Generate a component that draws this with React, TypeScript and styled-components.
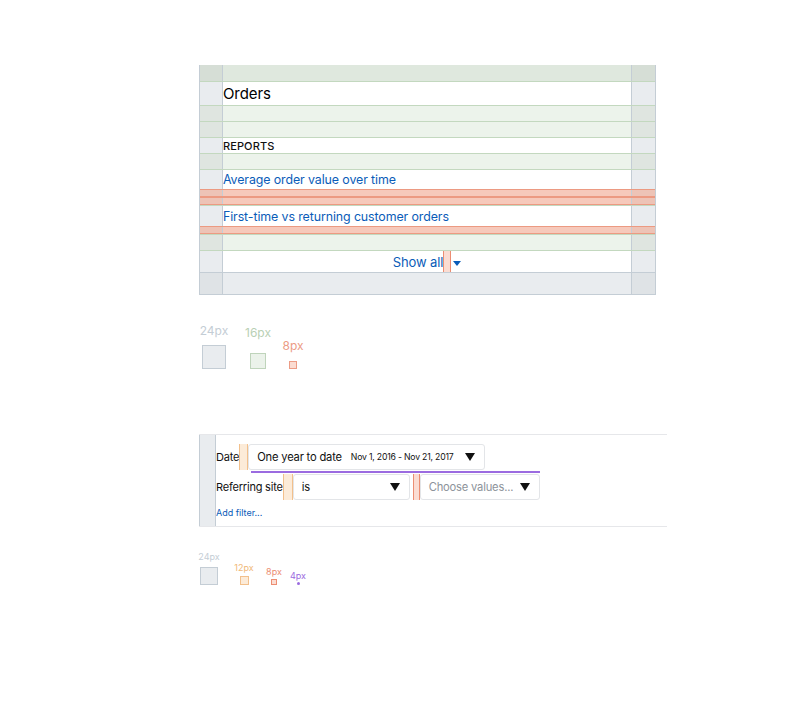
import React from "react";
import styled, { createGlobalStyle, css } from "styled-components";

const Global = createGlobalStyle`
  html, body { margin: 0; padding: 0; background: #fff; }
  body { font-family: Inter, "Noto Sans", sans-serif; color: #212b36; }
`;

const Page = styled.div`
  width: 803px;
  height: 704px;
  padding: 65px 0 0 199px;
  box-sizing: border-box;
  display: flex;
  flex-direction: column;
`;

const Panel = styled.div`
  width: 457px;
  display: flex;
  flex-direction: column;
  border-left: 1px solid #c4cdd5;
  border-right: 1px solid #c4cdd5;
  border-bottom: 1px solid #c4cdd5;
  box-sizing: border-box;
`;

type Kind = "top" | "green" | "white" | "red" | "gray";

const palette: Record<Kind, { mid: string; gut: string; line: string }> = {
  top: { mid: "#dfe8de", gut: "#d6ded6", line: "#c9d9c6" },
  green: { mid: "#ecf3eb", gut: "#dfe5e0", line: "#c3d8bf" },
  white: { mid: "#ffffff", gut: "#e9ecef", line: "#c3d8bf" },
  red: { mid: "#f6c9bb", gut: "#edc3b6", line: "#ec9a82" },
  gray: { mid: "#e9ecef", gut: "#dfe3e6", line: "#c4cdd5" },
};

const Row = styled.div<{ $kind: Kind; $h: number }>`
  display: grid;
  grid-template-columns: 23px 1fr 24px;
  height: ${(p) => p.$h}px;
  box-sizing: border-box;
  border-top: 1px solid ${(p) => palette[p.$kind].line};
  background: ${(p) => palette[p.$kind].mid};
  ${(p) =>
    p.$kind === "top" &&
    css`
      border-top: none;
    `}
  ${(p) =>
    p.$kind === "red" &&
    css`
      border-bottom: 1px solid ${palette.red.line};
    `}
`;

const Gutter = styled.div<{ $kind: Kind; $side: "l" | "r" }>`
  background: ${(p) => palette[p.$kind].gut};
  ${(p) =>
    p.$side === "l"
      ? css`border-right: 1px solid #c4cdd5;`
      : css`border-left: 1px solid #c4cdd5;`}
`;

const Cell = styled.div<{ $center?: boolean }>`
  display: flex;
  align-items: center;
  justify-content: ${(p) => (p.$center ? "center" : "flex-start")};
  min-width: 0;
`;

const Title = styled.span`
  font-size: 15px;
  color: #000;
  letter-spacing: -0.1px;
`;

const Heading = styled.span`
  font-size: 11px;
  font-weight: 500;
  color: #111;
  letter-spacing: 0.1px;
`;

const Link = styled.span<{ $size?: number }>`
  font-size: ${(p) => p.$size ?? 12.4}px;
  color: #0a5cb8;
  letter-spacing: -0.1px;
`;

const Marker = styled.span<{ $w: number; $fill: string; $line: string }>`
  display: block;
  align-self: stretch;
  flex: none;
  width: ${(p) => p.$w}px;
  box-sizing: border-box;
  background: ${(p) => p.$fill};
  border: 1px solid ${(p) => p.$line};
  border-top: none;
  border-bottom: none;
`;

const Caret = ({ color, w = 10, h = 8 }: { color: string; w?: number; h?: number }) => (
  <svg width={w} height={h} viewBox="0 0 10 8" preserveAspectRatio="none" style={{ display: "block", flex: "none" }}>
    <polygon points="0,0 10,0 5,8" fill={color} />
  </svg>
);

const BlueCaret = styled.span`
  margin-left: 2px;
  margin-top: 3px;
`;

const PanelRow = ({
  kind,
  h,
  center,
  children,
}: {
  kind: Kind;
  h: number;
  center?: boolean;
  children?: React.ReactNode;
}) => (
  <Row $kind={kind} $h={h}>
    <Gutter $kind={kind} $side="l" />
    <Cell $center={center}>{children}</Cell>
    <Gutter $kind={kind} $side="r" />
  </Row>
);

const Legend = styled.div<{ $top: number; $h: number }>`
  display: flex;
  align-items: flex-end;
  margin-top: ${(p) => p.$top}px;
  height: ${(p) => p.$h}px;
`;

const LegendItem = styled.div<{ $lift: number; $w: number; $ml?: number }>`
  width: ${(p) => p.$w}px;
  margin-left: ${(p) => p.$ml ?? 0}px;
  flex: none;
  display: flex;
  flex-direction: column;
  align-items: center;
  gap: ${(p) => p.$lift}px;
`;

const LegendLabel = styled.span<{ $color: string; $size: number }>`
  font-size: ${(p) => p.$size}px;
  color: ${(p) => p.$color};
  line-height: 1;
  white-space: nowrap;
`;

const Swatch = styled.span<{ $s: number; $fill: string; $line: string; $round?: boolean }>`
  display: block;
  width: ${(p) => p.$s}px;
  height: ${(p) => p.$s}px;
  box-sizing: border-box;
  background: ${(p) => p.$fill};
  border: ${(p) => (p.$s > 4 ? 1 : 0)}px solid ${(p) => p.$line};
  border-radius: ${(p) => (p.$round ? "50%" : "0")};
`;

const Filters = styled.div`
  margin-top: 65px;
  width: 468px;
  height: 93px;
  box-sizing: border-box;
  border-top: 1px solid #e6e7ea;
  border-bottom: 1px solid #e6e7ea;
  display: flex;
`;

const FilterGutter = styled.div`
  width: 17px;
  box-sizing: border-box;
  background: #e9ecef;
  border-left: 1px solid #c4cdd5;
  border-right: 1px solid #c4cdd5;
`;

const FilterBody = styled.div`
  display: flex;
  flex-direction: column;
  padding: 9px 0 0 0;
`;

const FilterRow = styled.div`
  display: flex;
  align-items: stretch;
  height: 26px;
  margin-bottom: 4px;
  position: relative;
`;

const FilterLabel = styled.span`
  font-size: 11px;
  color: #111;
  display: flex;
  align-items: center;
  letter-spacing: -0.2px;
`;

const Select = styled.div<{ $w: number }>`
  width: ${(p) => p.$w}px;
  flex: none;
  box-sizing: border-box;
  border: 1px solid #e3e5e8;
  border-radius: 3px;
  display: flex;
  align-items: center;
  padding: 0 9px 0 8px;
  background: #fff;
  overflow: hidden;
`;

const SelectText = styled.span<{ $muted?: boolean; $size?: number }>`
  font-size: ${(p) => p.$size ?? 11.2}px;
  color: ${(p) => (p.$muted ? "#8d939a" : "#111")};
  white-space: nowrap;
  letter-spacing: -0.2px;
  & + & {
    margin-left: 9px;
  }
`;

const Spacer = styled.span<{ $w?: number }>`
  flex: ${(p) => (p.$w ? `0 0 ${p.$w}px` : "1")};
`;

const Underline = styled.div`
  position: absolute;
  left: 35px;
  top: 27px;
  width: 289px;
  height: 2px;
  background: #9b6be0;
`;

const AddFilter = styled.span`
  font-size: 9px;
  color: #0a5cb8;
  margin-top: 3px;
`;

export default function App() {
  return (
    <>
      <Global />
      <Page>
        <Panel>
          <PanelRow kind="top" h={16} />
          <PanelRow kind="white" h={24}>
            <Title>Orders</Title>
          </PanelRow>
          <PanelRow kind="green" h={16} />
          <PanelRow kind="green" h={16} />
          <PanelRow kind="white" h={16}>
            <Heading>REPORTS</Heading>
          </PanelRow>
          <PanelRow kind="green" h={16} />
          <PanelRow kind="white" h={20}>
            <Link>Average order value over time</Link>
          </PanelRow>
          <PanelRow kind="red" h={8} />
          <PanelRow kind="red" h={8} />
          <PanelRow kind="white" h={21}>
            <Link>First-time vs returning customer orders</Link>
          </PanelRow>
          <PanelRow kind="red" h={8} />
          <PanelRow kind="green" h={16} />
          <PanelRow kind="white" h={22} center>
            <Link $size={13}>Show all</Link>
            <Marker $w={8} $fill="#fbdcd2" $line="#ec8d72" />
            <BlueCaret>
              <Caret color="#0a5cb8" w={8} h={5} />
            </BlueCaret>
          </PanelRow>
          <PanelRow kind="gray" h={22} />
        </Panel>

        <Legend $top={26} $h={48}>
          <LegendItem $w={30} $lift={8}>
            <LegendLabel $color="#c4cdd5" $size={12}>24px</LegendLabel>
            <Swatch $s={24} $fill="#e9ecef" $line="#c4cdd5" />
          </LegendItem>
          <LegendItem $w={28} $ml={15} $lift={14}>
            <LegendLabel $color="#b9d0b4" $size={12}>16px</LegendLabel>
            <Swatch $s={16} $fill="#ebf2ea" $line="#bfd4bb" />
          </LegendItem>
          <LegendItem $w={28} $ml={7} $lift={9}>
            <LegendLabel $color="#ec9c85" $size={12}>8px</LegendLabel>
            <Swatch $s={8} $fill="#fbdcd2" $line="#ec9c85" />
          </LegendItem>
        </Legend>

        <Filters>
          <FilterGutter />
          <FilterBody>
            <FilterRow>
              <FilterLabel>Date</FilterLabel>
              <Marker $w={9} $fill="#fcebd8" $line="#f2c08c" />
              <Select $w={237}>
                <SelectText>One year to date</SelectText>
                <SelectText $size={8.7}>Nov 1, 2016 - Nov 21, 2017</SelectText>
                <Spacer />
                <Caret color="#111" w={10} h={8} />
              </Select>
              <Underline />
            </FilterRow>
            <FilterRow>
              <FilterLabel>Referring site</FilterLabel>
              <Marker $w={10} $fill="#fcebd8" $line="#f2c08c" />
              <Select $w={117}>
                <SelectText>is</SelectText>
                <Spacer />
                <Caret color="#111" w={10} h={8} />
              </Select>
              <Spacer $w={3} />
              <Marker $w={7} $fill="#fbdcd2" $line="#ec8d72" />
              <Select $w={120}>
                <SelectText $muted>Choose values...</SelectText>
                <Spacer />
                <Caret color="#111" w={10} h={8} />
              </Select>
            </FilterRow>
            <AddFilter>Add filter...</AddFilter>
          </FilterBody>
        </Filters>

        <Legend $top={8} $h={50}>
          <LegendItem $w={20} $lift={6}>
            <LegendLabel $color="#c4cdd5" $size={9}>24px</LegendLabel>
            <Swatch $s={18} $fill="#e9ecef" $line="#c4cdd5" />
          </LegendItem>
          <LegendItem $w={20} $ml={15} $lift={4}>
            <LegendLabel $color="#f0b878" $size={9}>12px</LegendLabel>
            <Swatch $s={9} $fill="#fcebd8" $line="#f2c08c" />
          </LegendItem>
          <LegendItem $w={20} $ml={10} $lift={3}>
            <LegendLabel $color="#ec8d72" $size={9}>8px</LegendLabel>
            <Swatch $s={6} $fill="#fbdcd2" $line="#ec8d72" />
          </LegendItem>
          <LegendItem $w={20} $ml={4} $lift={2}>
            <LegendLabel $color="#9b6be0" $size={9}>4px</LegendLabel>
            <Swatch $s={3} $fill="#9b6be0" $line="#9b6be0" $round />
          </LegendItem>
        </Legend>
      </Page>
    </>
  );
}
